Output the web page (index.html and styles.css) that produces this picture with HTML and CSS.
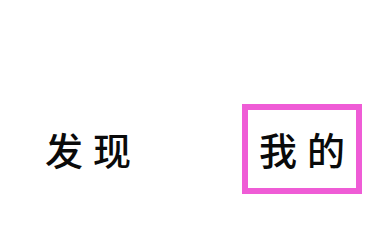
FILE: index.html
```html
<!DOCTYPE html>
<html lang="zh">
<head>
<meta charset="utf-8">
<link rel="stylesheet" href="styles.css">
</head>
<body>
<div class="tabs">
  <div class="tab"><span>发</span><span>现</span></div>
  <div class="tab tab-active"><span>我</span><span>的</span></div>
</div>
</body>
</html>
```
FILE: styles.css
```css
html, body {
  margin: 0;
  background: #ffffff;
}
.tabs {
  display: flex;
  align-items: center;
  padding: 104px 0 0 45px;
  gap: 111px;
  font-family: "Noto Sans CJK SC", "Noto Sans", sans-serif;
  font-size: 38px;
  font-weight: 500;
  color: #0a0a0a;
}
.tab {
  display: flex;
  gap: 10px;
  line-height: 1;
}
.tab-active {
  box-sizing: border-box;
  width: 120px;
  height: 90px;
  border: 6px solid #ef5cd6;
  justify-content: center;
  align-items: center;
}
```
